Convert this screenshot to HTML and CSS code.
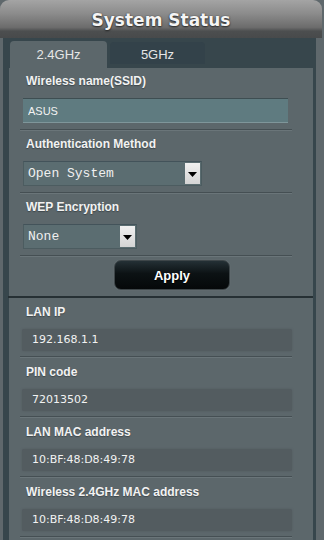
FILE: index.html
```html
<!DOCTYPE html>
<html lang="en">
<head>
  <meta charset="UTF-8">
  <meta name="viewport" content="width=device-width,initial-scale=1.0">
  <title>System Status</title>
  <link rel="stylesheet" href="styles.css">
</head>
<body>
  <div class="header"><h1>System Status</h1></div>
  <div class="frame">
    <!-- band tabs -->
    <div class="tabs">
      <div class="tab active">2.4GHz</div>
      <div class="tab">5GHz</div>
    </div>

    <div class="panel">
      <!-- wireless settings -->
      <div class="form-area">
        <div class="row">
          <div class="label">Wireless name(SSID)</div>
          <input class="text-input" type="text" value="ASUS">
        </div>
        <div class="row">
          <div class="label">Authentication Method</div>
          <div class="select select-auth">
            <span class="select-text">Open System</span>
            <span class="arrow"><svg width="9" height="6" viewBox="0 0 9 6"><path d="M0 1h9L4.5 6z" fill="#000"/></svg></span>
          </div>
        </div>
        <div class="row">
          <div class="label">WEP Encryption</div>
          <div class="select select-wep">
            <span class="select-text">None</span>
            <span class="arrow"><svg width="9" height="6" viewBox="0 0 9 6"><path d="M0 1h9L4.5 6z" fill="#000"/></svg></span>
          </div>
        </div>
        <div class="apply-row"><button class="apply">Apply</button></div>
      </div>

      <div class="divider"></div>

      <!-- status info -->
      <div class="form-area status">
        <div class="row">
          <div class="label">LAN IP</div>
          <div class="value">192.168.1.1</div>
        </div>
        <div class="row">
          <div class="label">PIN code</div>
          <div class="value">72013502</div>
        </div>
        <div class="row">
          <div class="label">LAN MAC address</div>
          <div class="value">10:BF:48:D8:49:78</div>
        </div>
        <div class="row">
          <div class="label">Wireless 2.4GHz MAC address</div>
          <div class="value">10:BF:48:D8:49:78</div>
        </div>
      </div>
    </div>
  </div>
</body>
</html>
```

FILE: styles.css
```css
body { margin: 0; padding: 0; background: #5f686c; font-family: "Liberation Sans", Arial, sans-serif; overflow: hidden; }
.header {
  height: 38px; margin-right: 2px; border-radius: 9px 9px 0 0;
  background: linear-gradient(#a4a4a4 0%, #8c8c8c 35%, #6c6c6c 72%, #4c4e4f 82%, #484a4b 100%);
  display: flex; justify-content: center; align-items: flex-start;
}
.header h1 {
  margin: 0; padding-top: 9px; font-family: "DejaVu Sans", Verdana, sans-serif; font-weight: bold; font-size: 17px;
  line-height: 22px; color: #f4f4f4; text-shadow: 0 1px 2px #222, 0 0 1px #333;
}
.frame { margin-left: 3px; width: 313px; background: #37464c; padding: 0 3px 0 6px; box-sizing: border-box; height: 502px; }
.tabs { height: 30px; display: flex; align-items: flex-start; padding-top: 3px; box-sizing: border-box; }
.tab {
  font-size: 13px; color: #e6e6e6; text-align: center; box-sizing: border-box;
  border-radius: 4px 4px 0 0;
}
.tab.active { margin-left: 1px; width: 97px; height: 27px; line-height: 28px; background: #5c676b; }
.tab:not(.active) { margin-left: 3px; margin-top: 1px; width: 95px; height: 22px; line-height: 26px; background: #33424a; }
.panel { background: #5c676b; height: 472px; }
.form-area { padding: 0 21px 0 11px; }
.row { padding-top: 5px; border-bottom: 1px solid #6a7579; }
.row::after { content: ""; display: block; margin-top: 6px; border-top: 1px solid #454f53; }
.label {
  padding-left: 6px; height: 16px; line-height: 16px; font-size: 12px; font-weight: bold; color: #f2f2f2;
  text-shadow: 0 1px 1px #3e474b; margin-bottom: 9px;
}
.text-input {
  display: block; margin-left: 3px; width: 265px; height: 25px; box-sizing: border-box;
  background: #5f7b80; border: none; border-top: 1px solid #3e4e52; border-bottom: 1px solid #7f969a;
  color: #f2f2f2; font-family: "Liberation Sans", Arial, sans-serif; font-size: 11px; padding: 0 5px; outline: none;
}
.select {
  margin-left: 3px; height: 25px; box-sizing: border-box; display: flex; align-items: center; justify-content: space-between;
  background: #5b6d71; border: 1px solid #4c5c60; border-top-color: #43535a;
}
.select-auth { width: 179px; }
.select-wep { width: 114px; }
.select-text { padding-left: 4px; font-family: "Liberation Mono", "Courier New", monospace; font-size: 13px; color: #f0f0f0; }
.arrow {
  width: 15px; height: 21px; margin-right: 1px; display: flex; align-items: center; justify-content: center;
  background: linear-gradient(#f0f0f0, #d4d4d4);
}
.apply-row { padding: 3px 0 6px 94px; }
.apply {
  display: block; width: 116px; height: 30px; border-radius: 7px; border: 1px solid #3e4649;
  background: linear-gradient(#243035, #0c1214 45%, #050809); box-shadow: 0 0 1px #7a8488;
  color: #fff; font-family: "Liberation Sans", Arial, sans-serif; font-weight: bold; font-size: 13px;
  text-shadow: 0 1px 1px #000;
}
.divider { height: 2px; background: #263034; margin-left: -1px; }
.status .row { padding-top: 6px; }
.status .row::after { margin-top: 5px; }
.value {
  margin-left: 2px; width: 270px; height: 22px; line-height: 22px; box-sizing: border-box; padding-left: 10px;
  background: #535c60; border-radius: 2px; box-shadow: 0 0 2px #50595d;
  font-family: "DejaVu Sans", Verdana, sans-serif; font-size: 11px; color: #f2f2f2;
}
```
